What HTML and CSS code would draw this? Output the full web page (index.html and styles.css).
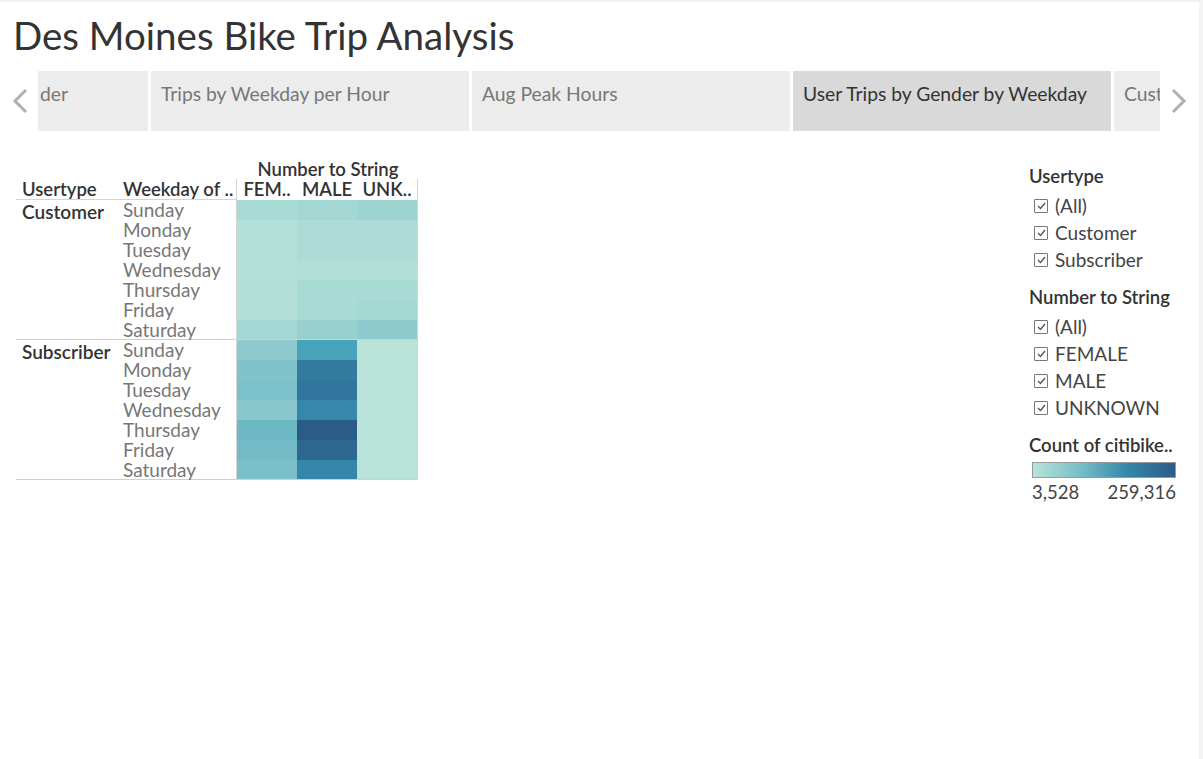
FILE: index.html
```html
<!DOCTYPE html>
<html>
<head>
<meta charset="utf-8">
<link rel="stylesheet" href="styles.css">
</head>
<body>
<div class="page">
  <h1 class="title">Des Moines Bike Trip Analysis</h1>

  <div class="tabbar">
    <div class="arrow arrow-left">
      <svg width="16" height="26" viewBox="0 0 16 26"><path d="M14 2 L3 13 L14 24" fill="none" stroke="#b0b0b0" stroke-width="3"/></svg>
    </div>
    <div class="tabs-viewport">
      <div class="tabs">
        <div class="tab tab-partial">der</div>
        <div class="tab">Trips by Weekday per Hour</div>
        <div class="tab">Aug Peak Hours</div>
        <div class="tab tab-active">User Trips by Gender by Weekday</div>
        <div class="tab tab-last">Customer Trips by Weekday</div>
      </div>
    </div>
    <div class="arrow arrow-right">
      <svg width="16" height="26" viewBox="0 0 16 26"><path d="M2 2 L13 13 L2 24" fill="none" stroke="#b0b0b0" stroke-width="3"/></svg>
    </div>
  </div>

  <div class="content">
    <div class="heatmap">
      <div class="hm-top">
        <div class="hm-spacer"></div>
        <div class="hm-colgroup">Number to String</div>
      </div>
      <div class="hm-head">
        <div class="hm-head-labels">
          <div class="h-user">Usertype</div>
          <div class="h-week">Weekday of ..</div>
        </div>
        <div class="hm-head-cols">
          <div>FEM..</div>
          <div>MALE</div>
          <div>UNK..</div>
        </div>
      </div>

      <div class="hm-group">
        <div class="g-user">Customer</div>
        <div class="g-days">
          <div>Sunday</div><div>Monday</div><div>Tuesday</div><div>Wednesday</div><div>Thursday</div><div>Friday</div><div>Saturday</div>
        </div>
        <div class="g-cells">
          <div style="background:#a8dbd5"></div><div style="background:#a3d7d3"></div><div style="background:#9dd4d1"></div>
          <div style="background:#b3e1d8"></div><div style="background:#addcd6"></div><div style="background:#addcd6"></div>
          <div style="background:#b3e1d8"></div><div style="background:#addcd6"></div><div style="background:#addcd6"></div>
          <div style="background:#b4e1d8"></div><div style="background:#b2e0d7"></div><div style="background:#b2e0d7"></div>
          <div style="background:#b2e0d7"></div><div style="background:#a9dbd5"></div><div style="background:#a9dbd5"></div>
          <div style="background:#b2e0d7"></div><div style="background:#a9dbd5"></div><div style="background:#a3d8d3"></div>
          <div style="background:#a3d7d3"></div><div style="background:#98d0d0"></div><div style="background:#8ecacd"></div>
        </div>
      </div>

      <div class="hm-group">
        <div class="g-user">Subscriber</div>
        <div class="g-days">
          <div>Sunday</div><div>Monday</div><div>Tuesday</div><div>Wednesday</div><div>Thursday</div><div>Friday</div><div>Saturday</div>
        </div>
        <div class="g-cells">
          <div style="background:#8ecacd"></div><div style="background:#47a3b9"></div><div style="background:#b9e3d9"></div>
          <div style="background:#80c3ca"></div><div style="background:#337c9f"></div><div style="background:#b9e3d9"></div>
          <div style="background:#7cc1c9"></div><div style="background:#31779d"></div><div style="background:#b9e3d9"></div>
          <div style="background:#89c7ce"></div><div style="background:#3588a9"></div><div style="background:#b9e3d9"></div>
          <div style="background:#6db8c5"></div><div style="background:#2d5b87"></div><div style="background:#b9e3d9"></div>
          <div style="background:#73bcc7"></div><div style="background:#2e6790"></div><div style="background:#b9e3d9"></div>
          <div style="background:#7bc0c9"></div><div style="background:#3486aa"></div><div style="background:#b9e3d9"></div>
        </div>
      </div>
    </div>

    <div class="legend">
      <div class="filter">
        <div class="filter-title">Usertype</div>
        <label class="check"><span class="box"><svg width="9" height="8" viewBox="0 0 9 8"><path d="M1 4 L3.5 6.5 L8 1" fill="none" stroke="#555" stroke-width="1.4"/></svg></span>(All)</label>
        <label class="check"><span class="box"><svg width="9" height="8" viewBox="0 0 9 8"><path d="M1 4 L3.5 6.5 L8 1" fill="none" stroke="#555" stroke-width="1.4"/></svg></span>Customer</label>
        <label class="check"><span class="box"><svg width="9" height="8" viewBox="0 0 9 8"><path d="M1 4 L3.5 6.5 L8 1" fill="none" stroke="#555" stroke-width="1.4"/></svg></span>Subscriber</label>
      </div>
      <div class="filter">
        <div class="filter-title">Number to String</div>
        <label class="check"><span class="box"><svg width="9" height="8" viewBox="0 0 9 8"><path d="M1 4 L3.5 6.5 L8 1" fill="none" stroke="#555" stroke-width="1.4"/></svg></span>(All)</label>
        <label class="check"><span class="box"><svg width="9" height="8" viewBox="0 0 9 8"><path d="M1 4 L3.5 6.5 L8 1" fill="none" stroke="#555" stroke-width="1.4"/></svg></span>FEMALE</label>
        <label class="check"><span class="box"><svg width="9" height="8" viewBox="0 0 9 8"><path d="M1 4 L3.5 6.5 L8 1" fill="none" stroke="#555" stroke-width="1.4"/></svg></span>MALE</label>
        <label class="check"><span class="box"><svg width="9" height="8" viewBox="0 0 9 8"><path d="M1 4 L3.5 6.5 L8 1" fill="none" stroke="#555" stroke-width="1.4"/></svg></span>UNKNOWN</label>
      </div>
      <div class="scale">
        <div class="filter-title">Count of citibike..</div>
        <div class="gradient"></div>
        <div class="scale-labels"><span>3,528</span><span>259,316</span></div>
      </div>
    </div>
  </div>
</div>
</body>
</html>
```

FILE: styles.css
```css
* { box-sizing: border-box; }
html, body { margin: 0; padding: 0; background: #fff; }
body {
  font-family: "Lato", "Liberation Sans", sans-serif;
  color: #333;
}
.page {
  width: 1203px;
  height: 759px;
  border-top: 2px solid #f2f2f2;
  border-right: 4px solid #f4f4f4;
  overflow: hidden;
}
.title {
  margin: 0;
  padding: 10px 0 0 13px;
  font-size: 38.5px;
  font-weight: 400;
  line-height: 46px;
  color: #333;
  height: 69px;
}
.tabbar {
  display: flex;
  height: 60px;
}
.arrow {
  display: flex;
  align-items: flex-start;
  padding-top: 17px;
}
.arrow-left { width: 38px; padding-left: 12px; }
.arrow-right { width: 39px; padding-left: 11px; }
.tabs-viewport {
  width: 1122px;
  overflow: hidden;
}
.tabs {
  display: flex;
  gap: 3px;
  height: 60px;
}
.tab {
  flex: 0 0 318px;
  background: #ececec;
  color: #777;
  font-size: 19.3px;
  padding: 11px 0 0 10px;
  white-space: nowrap;
  overflow: hidden;
}
.tab-partial { flex-basis: 110px; padding-left: 2px; }
.tab-last { flex-basis: 46px; }
.tab-active { background: #d9d9d9; color: #333; }

.content {
  display: flex;
  justify-content: space-between;
  padding-top: 27px;
}
.heatmap {
  margin-left: 16px;
  width: 402px;
  font-size: 19px;
}
.hm-top { display: flex; height: 21px; }
.hm-spacer { width: 220px; }
.hm-colgroup {
  width: 182px;
  text-align: center;
  font-weight: 600;
  font-size: 18.5px;
  color: #333;
  line-height: 22px;
  padding-left: 2px;
}
.hm-head { display: flex; height: 21px; }
.hm-head-labels {
  display: flex;
  width: 220px;
  border-bottom: 1px solid #d4d4d4;
  font-weight: 600;
  font-size: 18.5px;
  line-height: 21px;
}
.h-user { width: 102px; padding-left: 6px; }
.h-week { width: 118px; padding-left: 5px; white-space: nowrap; }
.hm-head-cols {
  display: flex;
  border-left: 1px solid #d4d4d4;
  border-right: 1px solid #d4d4d4;
  width: 182px;
  line-height: 21px;
  font-size: 18.5px;
  font-weight: 600;
}
.hm-head-cols div { width: 60px; text-align: center; }
.hm-group {
  display: flex;
  height: 140px;
  border-bottom: 1px solid #d0d0d0;
}
.g-user {
  width: 102px;
  padding-left: 6px;
  font-weight: 600;
  font-size: 19px;
  line-height: 24px;
}
.g-days {
  width: 118px;
  padding-left: 5px;
  color: #777;
  line-height: 20px;
}
.g-days div { height: 20px; }
.g-days div:last-child { height: 19px; }
.g-cells {
  width: 182px;
  display: grid;
  grid-template-columns: 60px 60px 60px;
  grid-template-rows: repeat(6, 20px) 19px;
  border-left: 1px solid #d4d4d4;
  border-right: 1px solid #d4d4d4;
}

.legend {
  width: 170px;
  padding-top: 7px;
}
.filter { margin-bottom: 13px; }
.filter-title {
  font-weight: 600;
  font-size: 18.5px;
  line-height: 22px;
  color: #333;
  margin-bottom: 5px;
  white-space: nowrap;
}
.check {
  display: flex;
  align-items: center;
  height: 27px;
  font-size: 19px;
  color: #444;
  padding-left: 5px;
}
.box {
  width: 14px;
  height: 14px;
  border: 1px solid #777;
  border-radius: 1px;
  display: inline-flex;
  align-items: center;
  justify-content: center;
  margin-right: 7px;
  background: #fff;
}
.scale { padding-top: 0; }
.scale .filter-title { margin-bottom: 6px; }
.gradient {
  margin-left: 3px;
  width: 144px;
  height: 16px;
  border: 1px solid #999;
  background: linear-gradient(to right, #b9e3d9 0%, #73bcc7 35%, #3689a9 65%, #2d5b87 100%);
}
.scale-labels {
  width: 144px;
  margin-left: 3px;
  display: flex;
  justify-content: space-between;
  font-size: 18.5px;
  color: #444;
  line-height: 28px;
}
```
